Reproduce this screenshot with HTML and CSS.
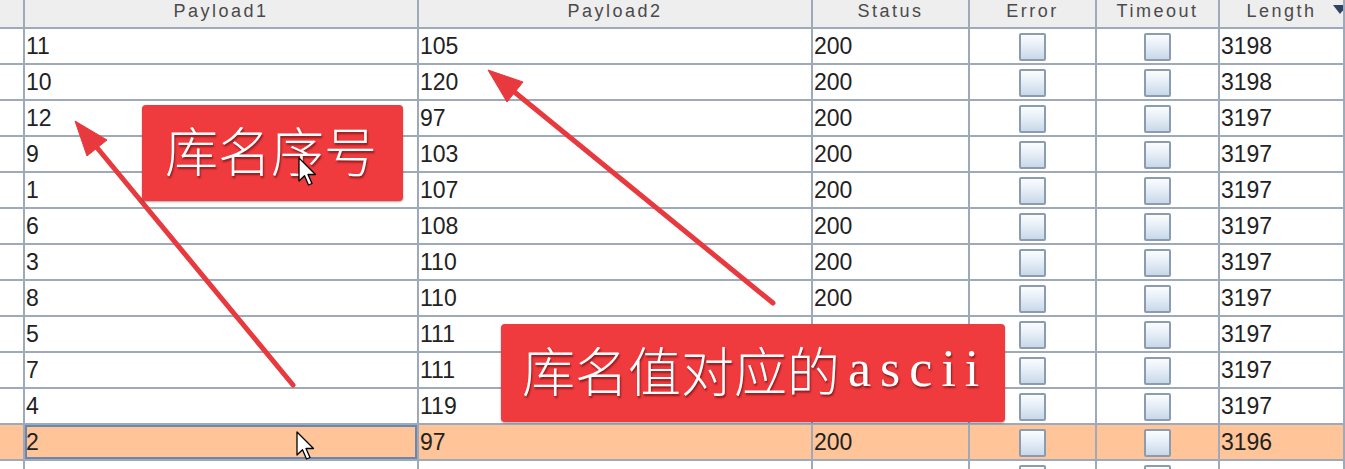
FILE: index.html
```html
<!DOCTYPE html>
<html lang="zh">
<head>
<meta charset="utf-8">
<title>Intruder results</title>
<link rel="stylesheet" href="styles.css">
</head>
<body>
<div class="page">
  <div class="table">
    <div class="row head">
      <div class="cell"></div>
      <div class="cell">Payload1</div>
      <div class="cell">Payload2</div>
      <div class="cell">Status</div>
      <div class="cell">Error</div>
      <div class="cell">Timeout</div>
      <div class="cell sort">Length</div>
    </div>
    <div class="row"><div class="cell"></div><div class="cell">11</div><div class="cell">105</div><div class="cell">200</div><div class="cell box"><span class="chk"></span></div><div class="cell box"><span class="chk"></span></div><div class="cell">3198</div></div>
    <div class="row"><div class="cell"></div><div class="cell">10</div><div class="cell">120</div><div class="cell">200</div><div class="cell box"><span class="chk"></span></div><div class="cell box"><span class="chk"></span></div><div class="cell">3198</div></div>
    <div class="row"><div class="cell"></div><div class="cell">12</div><div class="cell">97</div><div class="cell">200</div><div class="cell box"><span class="chk"></span></div><div class="cell box"><span class="chk"></span></div><div class="cell">3197</div></div>
    <div class="row"><div class="cell"></div><div class="cell">9</div><div class="cell">103</div><div class="cell">200</div><div class="cell box"><span class="chk"></span></div><div class="cell box"><span class="chk"></span></div><div class="cell">3197</div></div>
    <div class="row"><div class="cell"></div><div class="cell">1</div><div class="cell">107</div><div class="cell">200</div><div class="cell box"><span class="chk"></span></div><div class="cell box"><span class="chk"></span></div><div class="cell">3197</div></div>
    <div class="row"><div class="cell"></div><div class="cell">6</div><div class="cell">108</div><div class="cell">200</div><div class="cell box"><span class="chk"></span></div><div class="cell box"><span class="chk"></span></div><div class="cell">3197</div></div>
    <div class="row"><div class="cell"></div><div class="cell">3</div><div class="cell">110</div><div class="cell">200</div><div class="cell box"><span class="chk"></span></div><div class="cell box"><span class="chk"></span></div><div class="cell">3197</div></div>
    <div class="row"><div class="cell"></div><div class="cell">8</div><div class="cell">110</div><div class="cell">200</div><div class="cell box"><span class="chk"></span></div><div class="cell box"><span class="chk"></span></div><div class="cell">3197</div></div>
    <div class="row"><div class="cell"></div><div class="cell">5</div><div class="cell">111</div><div class="cell">200</div><div class="cell box"><span class="chk"></span></div><div class="cell box"><span class="chk"></span></div><div class="cell">3197</div></div>
    <div class="row"><div class="cell"></div><div class="cell">7</div><div class="cell">111</div><div class="cell">200</div><div class="cell box"><span class="chk"></span></div><div class="cell box"><span class="chk"></span></div><div class="cell">3197</div></div>
    <div class="row"><div class="cell"></div><div class="cell">4</div><div class="cell">119</div><div class="cell">200</div><div class="cell box"><span class="chk"></span></div><div class="cell box"><span class="chk"></span></div><div class="cell">3197</div></div>
    <div class="row hl"><div class="cell"></div><div class="cell sel">2</div><div class="cell">97</div><div class="cell">200</div><div class="cell box"><span class="chk"></span></div><div class="cell box"><span class="chk"></span></div><div class="cell">3196</div></div>
    <div class="row"><div class="cell"></div><div class="cell"></div><div class="cell"></div><div class="cell"></div><div class="cell box"><span class="chk"></span></div><div class="cell box"><span class="chk"></span></div><div class="cell"></div></div>
  </div>

  <svg class="arrows" width="1345" height="469" viewBox="0 0 1345 469">
    <g fill="#e8393e" stroke="#e8393e">
      <line x1="293" y1="385" x2="94" y2="144" stroke-width="5" stroke-linecap="round"/>
      <polygon points="75,121 107,140 87,156" stroke-width="1" stroke-linejoin="round"/>
      <line x1="773" y1="303" x2="512" y2="90" stroke-width="5" stroke-linecap="round"/>
      <polygon points="488,70 523,82 507,102" stroke-width="1" stroke-linejoin="round"/>
    </g>
  </svg>

  <div class="label label-a">库名序号</div>
  <div class="label label-b">库名值对应的<span class="latin">ascii</span></div>

  <svg class="cursor cursor-a" width="20" height="30" viewBox="0 0 20 30">
    <path d="M1 1 V24 L6.5 18.8 L10.5 28 L14 26.5 L10 17.5 H17.5 Z" fill="#fff" stroke="#000" stroke-width="1.3" stroke-linejoin="round"/>
  </svg>
  <svg class="cursor cursor-b" width="20" height="30" viewBox="0 0 20 30">
    <path d="M1 1 V24 L6.5 18.8 L10.5 28 L14 26.5 L10 17.5 H17.5 Z" fill="#fff" stroke="#000" stroke-width="1.3" stroke-linejoin="round"/>
  </svg>
</div>
</body>
</html>
```

FILE: styles.css
```css
* { box-sizing: border-box; }

html, body {
  margin: 0;
  padding: 0;
  background: #ffffff;
}

.page {
  position: relative;
  width: 1345px;
  height: 469px;
  overflow: hidden;
}

.table {
  display: flex;
  flex-direction: column;
  width: 1345px;
}

.row {
  display: grid;
  grid-template-columns: 25px 394px 394px 157px 127px 123px 1fr;
  height: 36px;
  border-bottom: 2px solid #9eaaba;
  background: #ffffff;
  font-family: "Liberation Sans", Arial, sans-serif;
  font-size: 23px;
  color: #222222;
}

.cell {
  border-right: 2px solid #9eaaba;
  line-height: 34px;
  padding-left: 1px;
  white-space: nowrap;
  overflow: hidden;
}

.row.head {
  height: 29px;
  background: #eeeeee;
  font-size: 18px;
  letter-spacing: 2.5px;
  color: #4a4a4a;
}

.row.head .cell {
  line-height: 22px;
  text-align: center;
  padding-left: 0;
}

.row.head .sort {
  position: relative;
}

.row.head .sort::after {
  content: "";
  position: absolute;
  right: -4px;
  top: 5px;
  border-left: 7px solid transparent;
  border-right: 7px solid transparent;
  border-top: 9px solid #2f4462;
}

.row.hl {
  background: #ffc497;
}

.cell.sel {
  box-shadow: inset 0 0 0 2px #6d86ae;
}

.cell.box {
  display: flex;
  justify-content: center;
  align-items: flex-start;
  padding-top: 4px;
  padding-left: 0;
}

.chk {
  width: 27px;
  height: 28px;
  border: 2px solid #8b9bb0;
  border-radius: 2px;
  background: linear-gradient(to bottom, #fbfdff 0%, #e6eef7 45%, #c9d8e8 100%);
}

.arrows {
  position: absolute;
  left: 0;
  top: 0;
}

.label {
  position: absolute;
  display: flex;
  align-items: center;
  height: 96px;
  padding-bottom: 8px;
  background: #ef3a3e;
  border-radius: 4px;
  box-shadow: 0 1px 2px rgba(0, 0, 0, 0.35);
  color: #ffffff;
  font-family: "Noto Sans CJK SC", "Noto Sans CJK JP", sans-serif;
  font-weight: 300;
  font-size: 53px;
  line-height: 1;
  white-space: nowrap;
  text-shadow: 1px 2px 2px rgba(60, 0, 0, 0.55);
}

.label-a {
  left: 142px;
  top: 105px;
  width: 261px;
  padding-left: 23px;
}

.label-b {
  left: 501px;
  top: 324px;
  width: 504px;
  height: 98px;
  padding-left: 21px;
}

.label .latin {
  font-family: "Liberation Serif", "Times New Roman", serif;
  font-weight: 400;
  font-size: 52px;
  letter-spacing: 9px;
  margin-left: 8px;
}

.cursor {
  position: absolute;
}

.cursor-a {
  left: 298px;
  top: 157px;
}

.cursor-b {
  left: 296px;
  top: 431px;
}
```
